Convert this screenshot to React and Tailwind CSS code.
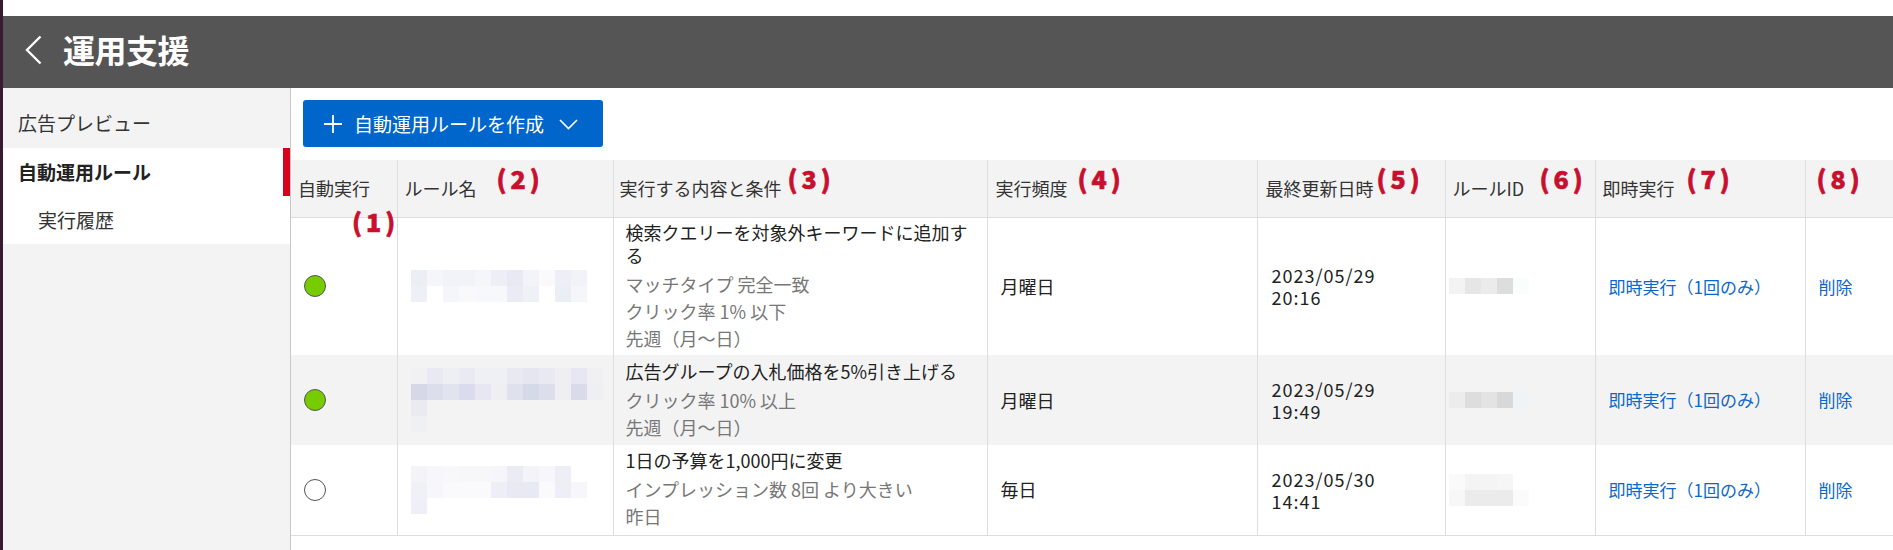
import React from "react";

const NAME_MOSAICS = [
  [
    ["#eceef6", "#f5f6fa", "#f2f3f8", "#f2f3f8", "#f5f6fa", "#eeeff6", "#e8e9f3", "#f3f4f9", "#fafafc", "#eeeff6", "#f2f3f8"],
    ["#eef0f7", "#ffffff", "#f5f6fa", "#f9f9fc", "#f7f8fb", "#f7f8fb", "#eaebf4", "#f0f1f7", "#ffffff", "#eceef6", "#f5f6fa"],
  ],
  [
    ["#f1f1f4", "#e9eaf1", "#eeeff3", "#e9eaf2", "#eff0f3", "#eff0f3", "#e9eaf1", "#e5e6f0", "#e9eaf1", "#efeff3", "#e6e7f0", "#f0f0f3"],
    ["#d6d8e8", "#dcdeeb", "#e1e3ee", "#dadced", "#e6e7f0", "#eeeef3", "#dfe1ed", "#d6d9e8", "#dcdeeb", "#eeeef3", "#d9dbea", "#eeeff3"],
    ["#eaebf1", null, null, null, null, null, null, null, null, null, null, null],
    ["#eff0f3", null, null, null, null, null, null, null, null, null, null, null],
  ],
  [
    ["#f3f3f8", "#f7f7fb", "#f8f8fb", "#f7f7fa", "#f7f7fa", "#f6f6fa", "#eaebf3", "#f3f3f8", "#f7f7fb", "#eeeff6", "#ffffff", "#ffffff"],
    ["#f0f0f7", "#f7f7fb", "#fafafd", "#fafafd", "#fafafd", "#eeeff6", "#e8e9f3", "#e8e9f3", "#fafafd", "#eeeff6", "#f7f7fb", "#ffffff"],
    ["#eeeff7", null, null, null, null, null, null, null, null, null, null, null],
  ],
];

const ID_MOSAICS = [
  [["#f3f3f3", "#e6e6e6", "#ebebeb", "#dddddd", "#fbfcfc"]],
  [["#ececec", "#dddddd", "#e3e3e3", "#d8d8d8", "#f1f2f4"]],
  [
    ["#fafafa", "#f4f4f4", "#f4f4f4", "#f6f6f6", "#ffffff"],
    ["#f7f7f7", "#ebebeb", "#ebebeb", "#ebebeb", "#fbfbfb"],
  ],
];

function Mosaic({ rows }) {
  const cols = rows[0].length;
  return (
    <svg width={cols * 16} height={rows.length * 16} shapeRendering="crispEdges" className="block">
      {rows.map((r, y) =>
        r.map((c, x) =>
          c ? <rect key={`${x}-${y}`} x={x * 16} y={y * 16} width="16" height="16" fill={c} /> : null
        )
      )}
    </svg>
  );
}

const ROWS = [
  {
    on: true,
    title: "検索クエリーを対象外キーワードに追加する",
    conds: ["マッチタイプ 完全一致", "クリック率 1% 以下", "先週（月〜日）"],
    freq: "月曜日",
    date: "2023/05/29",
    time: "20:16",
    h: "h-[138px]",
    bg: "bg-white",
  },
  {
    on: true,
    title: "広告グループの入札価格を5%引き上げる",
    conds: ["クリック率 10% 以上", "先週（月〜日）"],
    freq: "月曜日",
    date: "2023/05/29",
    time: "19:49",
    h: "h-[90px]",
    bg: "bg-[#f3f3f3]",
  },
  {
    on: false,
    title: "1日の予算を1,000円に変更",
    conds: ["インプレッション数 8回 より大きい", "昨日"],
    freq: "毎日",
    date: "2023/05/30",
    time: "14:41",
    h: "h-[90px]",
    bg: "bg-white",
  },
];

function Note({ children, className }) {
  return (
    <span
      className={
        "absolute z-10 text-[25px] leading-[25px] font-black tracking-[4px] text-[#c80f2e] whitespace-nowrap [-webkit-text-stroke:0.6px_#c80f2e] " +
        className
      }
    >
      {children}
    </span>
  );
}

export default function App() {
  return (
    <div className="h-[550px] w-full overflow-hidden bg-white border-l-[3px] border-[#361c33] flex flex-col font-['Noto_Sans_CJK_JP','Noto_Sans',sans-serif]">
      <div className="h-[16px] shrink-0 bg-white" />
      <div className="h-[72px] shrink-0 bg-[#555555] flex items-center">
        <svg width="17" height="30" viewBox="0 0 17 30" className="ml-[22px] mt-[-4px]">
          <polyline points="15.5,1.5 2,15 15.5,28.5" fill="none" stroke="#ffffff" strokeWidth="2.4" />
        </svg>
        <div className="ml-[21px] mt-[-6px] text-[32px] leading-[40px] font-bold text-white tracking-[-0.5px]">運用支援</div>
      </div>
      <div className="flex flex-1 min-h-0">
        <div className="w-[288px] shrink-0 bg-[#f3f3f3] border-r border-[#c8c8c8]">
          <div className="h-[60px] pl-[15px] pt-[22px] text-[19px] leading-[26px] text-[#333]">広告プレビュー</div>
          <div className="h-[48px] bg-white border-r-[7px] border-[#d7001d] pl-[15px] flex items-center text-[19px] font-bold text-[#222]">
            自動運用ルール
          </div>
          <div className="h-[48px] bg-white pl-[35px] flex items-center text-[19px] text-[#333]">実行履歴</div>
        </div>
        <div className="flex-1 min-w-0">
          <div className="pl-[12px] pt-[12px] pb-[13px]">
            <button className="h-[47px] w-[300px] bg-[#0066cc] rounded-[3px] text-white flex items-center pl-[20px]">
              <svg width="20" height="20" viewBox="0 0 20 20">
                <path d="M10 1V19M1 10H19" stroke="#ffffff" strokeWidth="1.8" fill="none" />
              </svg>
              <span className="ml-[11px] text-[19px] leading-[24px]">自動運用ルールを作成</span>
              <svg width="19" height="11" viewBox="0 0 19 11" className="ml-[15px] mt-[2px]">
                <polyline points="1,1 9.5,9.5 18,1" fill="none" stroke="#ffffff" strokeWidth="1.7" />
              </svg>
            </button>
          </div>
          <table className="w-full table-fixed border-collapse">
            <colgroup>
              <col className="w-[106px]" />
              <col className="w-[216px]" />
              <col className="w-[374px]" />
              <col className="w-[270px]" />
              <col className="w-[188px]" />
              <col className="w-[150px]" />
              <col className="w-[210px]" />
              <col className="w-[88px]" />
            </colgroup>
            <thead>
              <tr className="bg-[#f3f3f3] border-b border-[#dddddd]">
                <th className="relative h-[57px] pl-[7px] text-left font-normal text-[18px] text-[#333] align-middle">
                  自動実行
                  <Note className="left-[61px] top-[49px]">(1)</Note>
                </th>
                <th className="relative h-[57px] border-l border-[#dddddd] pl-[7px] text-left font-normal text-[18px] text-[#333]">
                  ルール名
                  <Note className="left-[99px] top-[6px]">(2)</Note>
                </th>
                <th className="relative h-[57px] border-l border-[#dddddd] pl-[6px] text-left font-normal text-[18px] text-[#333]">
                  実行する内容と条件
                  <Note className="left-[174px] top-[6px]">(3)</Note>
                </th>
                <th className="relative h-[57px] border-l border-[#dddddd] pl-[8px] text-left font-normal text-[18px] text-[#333]">
                  実行頻度
                  <Note className="left-[90px] top-[6px]">(4)</Note>
                </th>
                <th className="relative h-[57px] border-l border-[#dddddd] pl-[8px] text-left font-normal text-[18px] text-[#333]">
                  最終更新日時
                  <Note className="left-[119px] top-[6px]">(5)</Note>
                </th>
                <th className="relative h-[57px] border-l border-[#dddddd] pl-[7px] text-left font-normal text-[18px] text-[#333]">
                  ルールID
                  <Note className="left-[94px] top-[6px]">(6)</Note>
                </th>
                <th className="relative h-[57px] border-l border-[#dddddd] pl-[7px] text-left font-normal text-[18px] text-[#333]">
                  即時実行
                  <Note className="left-[91px] top-[6px]">(7)</Note>
                </th>
                <th className="relative h-[57px] border-l border-[#dddddd] pl-[7px] text-left font-normal text-[18px] text-[#333]">
                  <Note className="left-[11px] top-[6px]">(8)</Note>
                </th>
              </tr>
            </thead>
            <tbody>
              {ROWS.map((r, i) => (
                <tr key={i} className={r.bg + " " + (i === ROWS.length - 1 ? "border-b border-[#dddddd]" : "")}>
                  <td className={r.h + " pl-[13px] align-middle"}>
                    <div
                      className={
                        "w-[22px] h-[22px] rounded-full border-[1.5px] border-[#555555] " +
                        (r.on ? "bg-[#77cc00]" : "bg-white")
                      }
                    />
                  </td>
                  <td className="border-l border-[#dddddd] pl-[13px] align-middle">
                    <Mosaic rows={NAME_MOSAICS[i]} />
                  </td>
                  <td className="border-l border-[#dddddd] pl-[12px] pr-[12px] align-middle">
                    <div className="text-[18px] leading-[23px] text-[#222] mb-[4px]">{r.title}</div>
                    {r.conds.map((c, j) => (
                      <div key={j} className="text-[18px] leading-[27px] text-[#777777]">
                        {c}
                      </div>
                    ))}
                  </td>
                  <td className="border-l border-[#dddddd] pl-[13px] align-middle text-[18px] text-[#222]">{r.freq}</td>
                  <td className="border-l border-[#dddddd] pl-[14px] align-middle text-[18px] leading-[22px] tracking-[1px] text-[#222]">
                    <div>{r.date}</div>
                    <div>{r.time}</div>
                  </td>
                  <td className="border-l border-[#dddddd] pl-[3px] align-middle">
                    <Mosaic rows={ID_MOSAICS[i]} />
                  </td>
                  <td className="border-l border-[#dddddd] pl-[13px] align-middle text-[17px] text-[#0b67cc]">
                    <a className="cursor-pointer">即時実行（1回のみ）</a>
                  </td>
                  <td className="border-l border-[#dddddd] pl-[13px] align-middle text-[17px] text-[#0b67cc]">
                    <a className="cursor-pointer">削除</a>
                  </td>
                </tr>
              ))}
            </tbody>
          </table>
        </div>
      </div>
    </div>
  );
}
